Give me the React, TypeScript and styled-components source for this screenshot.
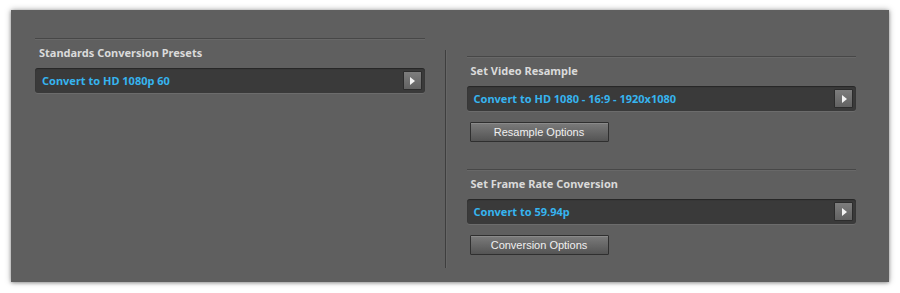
import React from 'react';
import styled, { createGlobalStyle } from 'styled-components';

const GlobalStyle = createGlobalStyle`
  html, body {
    margin: 0;
    padding: 0;
    background: #ffffff;
  }
  body {
    width: 900px;
    height: 293px;
    overflow: hidden;
  }
`;

interface Preset {
  title: string;
  value: string;
  action?: string;
}

const leftPresets: Preset[] = [
  { title: 'Standards Conversion Presets', value: 'Convert to HD 1080p 60' },
];

const rightPresets: Preset[] = [
  {
    title: 'Set Video Resample',
    value: 'Convert to HD 1080 - 16:9 - 1920x1080',
    action: 'Resample Options',
  },
  {
    title: 'Set Frame Rate Conversion',
    value: 'Convert to 59.94p',
    action: 'Conversion Options',
  },
];

const Section: React.FC<{ preset: Preset }> = ({ preset }) => (
  <SectionBox>
    <Rule />
    <Title>{preset.title}</Title>
    <Dropdown>
      <DropdownText>{preset.value}</DropdownText>
      <ArrowButton>
        <svg width="5" height="8" viewBox="0 0 5 8">
          <path d="M0 0 L5 4 L0 8 Z" fill="#f4f4f4" />
        </svg>
      </ArrowButton>
    </Dropdown>
    {preset.action && <OptionButton>{preset.action}</OptionButton>}
  </SectionBox>
);

const App: React.FC = () => {
  return (
    <>
      <GlobalStyle />
      <Page>
        <Panel>
          <Column>
            {leftPresets.map((p) => (
              <Section key={p.title} preset={p} />
            ))}
          </Column>
          <Divider />
          <Column $offset={18}>
            {rightPresets.map((p) => (
              <Section key={p.title} preset={p} />
            ))}
          </Column>
        </Panel>
      </Page>
    </>
  );
};

const Page = styled.div`
  padding: 10px 11px 11px 11px;
`;

const Panel = styled.div`
  display: flex;
  align-items: stretch;
  height: 272px;
  box-sizing: border-box;
  padding: 28px 33px 14px 24px;
  background: #5f5f5f;
  box-shadow: 0 0 6px rgba(0, 0, 0, 0.35), 0 1px 3px rgba(0, 0, 0, 0.25);
`;

const Column = styled.div<{ $offset?: number }>`
  width: 390px;
  display: flex;
  flex-direction: column;
  gap: 27px;
  padding-top: ${({ $offset }) => $offset || 0}px;
`;

const Divider = styled.div`
  width: 1px;
  margin: 12px 20px 0 20px;
  background: #3e3e3e;
  border-right: 1px solid #666;
`;

const SectionBox = styled.div`
  display: flex;
  flex-direction: column;
`;

const Rule = styled.div`
  height: 1px;
  background: #474747;
  border-bottom: 1px solid #686868;
  margin-bottom: 6px;
`;

const Title = styled.div`
  height: 14px;
  line-height: 14px;
  margin: 0 0 8px 4px;
  font-family: 'Noto Sans', 'Open Sans', sans-serif;
  font-size: 11px;
  font-weight: 700;
  color: #dadada;
`;

const Dropdown = styled.div`
  display: flex;
  align-items: center;
  justify-content: space-between;
  height: 25px;
  box-sizing: border-box;
  padding: 0 3px 0 7px;
  background: #3a3a3a;
  border-radius: 3px;
  box-shadow: 0 1px 0 #6c6c6c, inset 0 1px 1px rgba(0, 0, 0, 0.35);
`;

const DropdownText = styled.span`
  font-family: 'Noto Sans', 'Open Sans', sans-serif;
  font-size: 11px;
  font-weight: 700;
  color: #36b4ef;
  line-height: 14px;
`;

const ArrowButton = styled.div`
  width: 19px;
  height: 19px;
  box-sizing: border-box;
  display: flex;
  align-items: center;
  justify-content: center;
  background: linear-gradient(#7d7d7d, #626262);
  border: 1px solid #2c2c2c;
  border-radius: 1px;
  padding-left: 1px;
`;

const OptionButton = styled.button`
  align-self: flex-start;
  margin: 11px 0 0 3px;
  width: 139px;
  height: 20px;
  padding: 0;
  font-family: 'Liberation Sans', Arial, sans-serif;
  font-size: 11px;
  color: #f0f0f0;
  background: linear-gradient(#7b7b7b, #545454);
  border: 1px solid #2f2f2f;
  border-radius: 1px;
  box-shadow: inset 0 1px 0 rgba(255, 255, 255, 0.12);
  cursor: pointer;
`;

export default App;
